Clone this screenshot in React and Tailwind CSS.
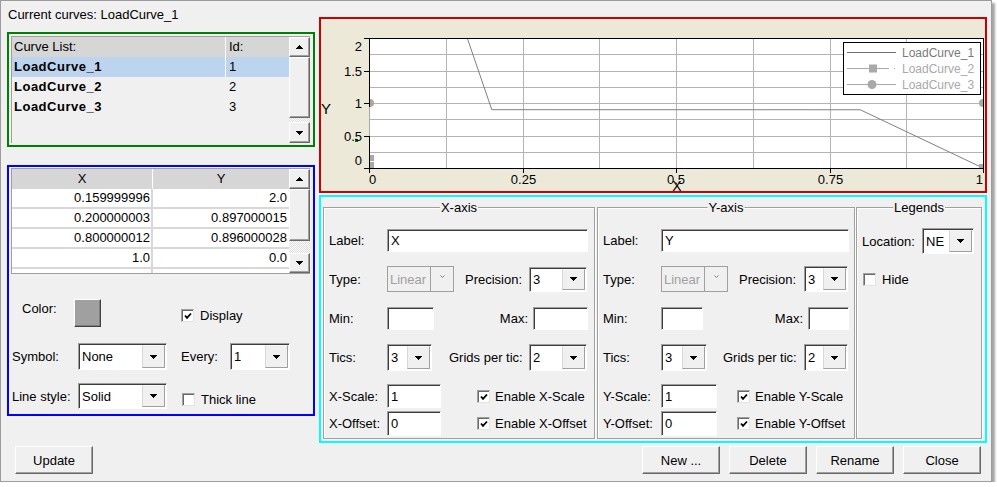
import React from "react";

const raised =
  "border border-t-white border-l-white border-r-[#696969] border-b-[#696969] bg-[#f0f0f0] shadow-[inset_-1px_-1px_0_#a0a0a0]";
const sunken =
  "border border-t-[#a0a0a0] border-l-[#a0a0a0] border-r-white border-b-white bg-white shadow-[inset_1px_1px_0_#3c3c3c]";

const curves = [
  { name: "LoadCurve_1", id: 1, selected: true },
  { name: "LoadCurve_2", id: 2 },
  { name: "LoadCurve_3", id: 3 },
];

const points = [
  ["0.159999996", "2.0"],
  ["0.200000003", "0.897000015"],
  ["0.800000012", "0.896000028"],
  ["1.0", "0.0"],
];

const xAxis = {
  axis: "X",
  label: "w-[201px]",
  precisionText: "w-[64px]",
  precision: "w-[58px] h-[25px]",
  min: "w-[47px]",
  maxText: "w-[99px]",
  max: "w-[55px]",
  tics: "w-[45px] h-[27px]",
  gridsText: "ml-[17px] w-[80px]",
  grids: "w-[58px] h-[27px]",
  scale: "w-[54px]",
  check: "ml-[36px]",
};

const yAxis = {
  axis: "Y",
  label: "w-[188px]",
  precisionText: "w-[65px]",
  precision: "w-[44px] h-[26px]",
  min: "w-[42px]",
  maxText: "w-[105px]",
  max: "w-[41px]",
  tics: "w-[46px] h-[27px]",
  gridsText: "ml-[16px] w-[81px]",
  grids: "w-[44px] h-[27px]",
  scale: "w-[56px]",
  check: "ml-[20px]",
};

function Triangle({ up = false }) {
  return (
    <svg width="7" height="4" viewBox="0 0 7 4" shapeRendering="crispEdges">
      <path
        d={up ? "M3 0h1v1h1v1h1v1h1v1h-7v-1h1v-1h1v-1h1z" : "M0 0h7v1h-1v1h-1v1h-1v1h-1v-1h-1v-1h-1v-1h-1z"}
        fill="#000"
      />
    </svg>
  );
}

function ScrollBar({ thumb, track }) {
  return (
    <div className="flex w-[21px] flex-col">
      <div className={`flex h-[20px] items-center justify-center ${raised}`}>
        <Triangle up />
      </div>
      <div className={`${thumb} ${raised}`} />
      <div className={`${track} bg-[repeating-conic-gradient(#ffffff_0%_25%,#dcdcdc_0%_50%)] bg-[length:2px_2px]`} />
      <div className={`flex flex-1 items-center justify-center ${raised}`}>
        <Triangle />
      </div>
    </div>
  );
}

function Combo({ value, className }) {
  return (
    <div className={`flex ${sunken} ${className}`}>
      <span className="flex flex-1 items-center overflow-hidden pl-[3px]">{value}</span>
      <span className="my-[1px] mr-[1px] flex w-[23px] items-center justify-center border border-t-[#f8f8f8] border-l-[#d8d8d8] border-r-[#a0a0a0] border-b-[#a0a0a0] bg-[#f0f0f0]">
        <Triangle />
      </span>
    </div>
  );
}

function DisabledCombo({ value }) {
  return (
    <div className="flex h-[26px] w-[67px] border border-[#a0a0a0] bg-[#f0f0f0]">
      <span className="flex flex-1 items-center pl-[2px] text-[#a0a0a0]">{value}</span>
      <span className="flex w-[23px] justify-center border-l border-[#a0a0a0] pt-[8px]">
        <svg width="5" height="3" viewBox="0 0 5 3">
          <path d="M0.5 0.5 L2.5 2.5 L4.5 0.5" stroke="#808080" fill="none" />
        </svg>
      </span>
    </div>
  );
}

function Field({ value, className }) {
  return <div className={`flex items-center pl-[3px] ${sunken} ${className}`}>{value}</div>;
}

function Check({ checked, className = "" }) {
  return (
    <span
      className={`flex h-[13px] w-[13px] shrink-0 items-center justify-center border border-t-[#a0a0a0] border-l-[#a0a0a0] border-r-[#e3e3e3] border-b-[#e3e3e3] bg-white shadow-[inset_1px_1px_0_#696969] ${className}`}
    >
      {checked && (
        <svg width="8" height="8" viewBox="0 0 8 8" className="ml-[1px] mt-[1px]">
          <path d="M1 3.5 L3 5.8 L7 1.5" stroke="#000" strokeWidth="1.8" fill="none" />
        </svg>
      )}
    </span>
  );
}

function Button({ children }) {
  return (
    <button type="button" className={`flex h-[28px] w-[78px] items-center justify-center ${raised}`}>
      {children}
    </button>
  );
}

function Group({ title, className, children }) {
  return (
    <div
      className={`relative h-[232px] border border-[#a0a0a0] shadow-[inset_1px_1px_0_#ffffff,1px_1px_0_#ffffff] ${className}`}
    >
      <span className="absolute left-1/2 top-[-8px] -translate-x-1/2 bg-[#f0f0f0] px-[1px] leading-[15px]">
        {title}
      </span>
      <div className="pl-[5px]">{children}</div>
    </div>
  );
}

function CurveList() {
  return (
    <section className="h-[115px] border-2 border-[#008000] py-[2px] pl-[2px] pr-[3px]">
      <div className="flex h-full border-l border-t border-[#a0a0a0]">
        <div className="flex-1">
          <div className="flex h-[20px] bg-[#d6d6d6] leading-[20px]">
            <div className="w-[214px] border-r border-white pl-[2px]">Curve List:</div>
            <div className="flex-1 pl-[3px]">Id:</div>
          </div>
          {curves.map((curve) => (
            <div
              key={curve.id}
              className={`flex h-[20px] leading-[20px] ${curve.selected ? "bg-[#bcd4ee]" : ""}`}
            >
              <div
                className={`w-[214px] pl-[2px] font-bold tracking-[0.5px] ${curve.selected ? "border-r border-white" : ""}`}
              >
                {curve.name}
              </div>
              <div className="flex-1 pl-[3px]">{curve.id}</div>
            </div>
          ))}
        </div>
        <ScrollBar thumb="h-[61px]" track="h-[4px]" />
      </div>
    </section>
  );
}

function PointsPanel() {
  return (
    <section className="h-[251px] border-2 border-[#0000ff] pl-[2px] pr-[3px] pt-[1px]">
      <div className="flex h-[106px] border border-r-0 border-[#a0a0a0]">
        <div className="flex flex-1 flex-col">
          <div className="flex h-[20px] bg-[#d6d6d6] leading-[20px]">
            <div className="w-[141px] border-r border-white text-center">X</div>
            <div className="flex-1 text-center">Y</div>
          </div>
          {points.map(([x, y]) => (
            <div key={x} className="flex h-[20px] border-b-2 border-[#d8d8d8] bg-white leading-[18px]">
              <div className="w-[141px] border-r-2 border-[#d8d8d8] pr-[1px] text-right">{x}</div>
              <div className="flex-1 pr-[2px] text-right">{y}</div>
            </div>
          ))}
          <div className="flex flex-1 bg-white">
            <div className="w-[141px] border-r-2 border-[#d8d8d8]" />
          </div>
        </div>
        <ScrollBar thumb="h-[52px]" track="h-[12px]" />
      </div>

      <div className="mt-[25px] flex h-[28px]">
        <div className="flex w-[170px] pl-[11px]">
          <span className="mt-[2px] w-[52px]">Color:</span>
          <div className="h-[28px] w-[27px] border border-t-white border-l-white border-r-[#404040] border-b-[#404040] bg-[#a0a0a0] shadow-[inset_-1px_-1px_0_#808080]" />
        </div>
        <div className="mt-[10px] flex h-[13px] items-center">
          <Check checked />
          <span className="ml-[6px]">Display</span>
        </div>
      </div>

      <div className="mt-[16px] flex h-[27px] items-center">
        <div className="flex w-[170px] items-center pl-[1px]">
          <span className="w-[66px]">Symbol:</span>
          <Combo value="None" className="h-[27px] w-[89px]" />
        </div>
        <span className="w-[49px]">Every:</span>
        <Combo value="1" className="h-[27px] w-[60px]" />
      </div>

      <div className="mt-[13px] flex h-[26px]">
        <div className="flex w-[170px] items-center pl-[1px]">
          <span className="w-[66px]">Line style:</span>
          <Combo value="Solid" className="h-[26px] w-[89px]" />
        </div>
        <div className="mt-[10px] flex h-[13px] items-center">
          <Check className="ml-[1px]" />
          <span className="ml-[6px]">Thick line</span>
        </div>
      </div>
    </section>
  );
}

function Chart() {
  const left = 369;
  const right = 983;
  const top = 38;
  const bottom = 168;
  const xAt = (v) => left + v * (right - left);
  const yAt = (v) => bottom - (v / 2) * (bottom - top);
  const crisp = (v) => Math.round(v) + 0.5;
  const steps = [1, 2, 3, 4, 5, 6, 7].map((i) => i / 8);
  const curve = [
    [0.16, 2],
    [0.2, 0.897],
    [0.8, 0.896],
    [1, 0],
  ]
    .map(([x, y]) => `${xAt(x)},${yAt(y)}`)
    .join(" ");

  return (
    <section className="h-[176px] border-2 border-[#cc0000] bg-[#ece9d8]">
      <svg
        width="664"
        height="172"
        viewBox="321 19 664 172"
        className="block"
        fontFamily="'Liberation Sans', Arial, sans-serif"
      >
        <defs>
          <clipPath id="plot">
            <rect x={left} y={top} width={right - left} height={bottom - top} />
          </clipPath>
        </defs>
        <rect x={left} y={top} width={right - left} height={bottom - top} fill="#fff" />
        {steps.map((s) => (
          <line key={`v${s}`} x1={crisp(xAt(s))} x2={crisp(xAt(s))} y1={top} y2={bottom} stroke="#b4b4b4" />
        ))}
        {steps.map((s) => (
          <line key={`h${s}`} x1={left} x2={right} y1={crisp(yAt(s * 2))} y2={crisp(yAt(s * 2))} stroke="#b4b4b4" />
        ))}
        <polyline points={curve} fill="none" stroke="#808080" />

        <g clipPath="url(#plot)" fill="#a8a8a8">
          <circle cx={370} cy={103} r={4} />
          <rect x={369} y={155} width={5} height={6} />
          <rect x={369} y={162} width={5} height={6} />
          <circle cx={983} cy={103} r={4} />
          <rect x={979} y={164} width={5} height={5} />
        </g>

        <rect x={left + 0.5} y={top + 0.5} width={right - left} height={bottom - top} fill="none" stroke="#000" />
        <line x1={369.5} x2={369.5} y1={107} y2={136} stroke="#a8a8a8" />
        <rect x={355} y={139} width={3} height={3} fill="#008000" />

        {[0, 0.5, 1, 1.5, 2].map((v) => (
          <line key={`ty${v}`} x1={364} x2={369} y1={crisp(yAt(v))} y2={crisp(yAt(v))} stroke="#000" />
        ))}
        {[0, 0.25, 0.5, 0.75, 1].map((v) => (
          <line key={`tx${v}`} x1={crisp(xAt(v))} x2={crisp(xAt(v))} y1={168} y2={173} stroke="#000" />
        ))}

        <g fontSize="13" fill="#000">
          <text x={362} y={50.5} textAnchor="end">2</text>
          <text x={362} y={75.5} textAnchor="end">1.5</text>
          <text x={362} y={107.5} textAnchor="end">1</text>
          <text x={362} y={140.5} textAnchor="end">0.5</text>
          <text x={362} y={165} textAnchor="end">0</text>
          <text x={369} y={184}>0</text>
          <text x={523.5} y={184} textAnchor="middle">0.25</text>
          <text x={676} y={184} textAnchor="middle">0.5</text>
          <text x={830.5} y={184} textAnchor="middle">0.75</text>
          <text x={983} y={184} textAnchor="end">1</text>
        </g>
        <text x={321} y={114} fontSize="15">Y</text>
        <text x={677} y={191} fontSize="14" textAnchor="middle">X</text>

        <rect x={843.5} y={42.5} width={137} height={52} fill="#fff" stroke="#000" />
        <line x1={847} x2={896} y1={52.5} y2={52.5} stroke="#6e6e6e" />
        <text x={902} y={57} fontSize="12" fill="#7a7a7a">LoadCurve_1</text>
        <line x1={847} x2={889} y1={68.5} y2={68.5} stroke="#a9a9a9" />
        <rect x={869} y={64.5} width={8} height={8} fill="#a9a9a9" />
        <rect x={894} y={68} width={1} height={1} fill="#a9a9a9" />
        <text x={902} y={73} fontSize="12" fill="#a9a9a9">LoadCurve_2</text>
        <line x1={847} x2={896} y1={84.5} y2={84.5} stroke="#a9a9a9" />
        <circle cx={872} cy={84.5} r={4.5} fill="#a9a9a9" />
        <text x={902} y={89} fontSize="12" fill="#a9a9a9">LoadCurve_3</text>
      </svg>
    </section>
  );
}

function AxisGroup({ c, className }) {
  return (
    <Group title={`${c.axis}-axis`} className={className}>
      <div className="mt-[21px] flex h-[23px] items-center">
        <span className="w-[58px]">Label:</span>
        <Field value={c.axis} className={`h-[23px] ${c.label}`} />
      </div>
      <div className="mt-[14px] flex h-[26px] items-center">
        <span className="w-[58px]">Type:</span>
        <DisabledCombo value="Linear" />
        <span className={`ml-[11px] ${c.precisionText}`}>Precision:</span>
        <Combo value="3" className={c.precision} />
      </div>
      <div className="mt-[15px] flex h-[23px] items-center">
        <span className="w-[58px]">Min:</span>
        <Field value="" className={`h-[23px] ${c.min}`} />
        <span className={`pr-[5px] text-right ${c.maxText}`}>Max:</span>
        <Field value="" className={`h-[23px] ${c.max}`} />
      </div>
      <div className="mt-[14px] flex h-[27px] items-center">
        <span className="w-[58px]">Tics:</span>
        <Combo value="3" className={c.tics} />
        <span className={c.gridsText}>Grids per tic:</span>
        <Combo value="2" className={c.grids} />
      </div>
      <div className="mt-[13px] flex h-[24px] items-center">
        <span className="w-[58px]">{c.axis}-Scale:</span>
        <Field value="1" className={`h-[24px] ${c.scale}`} />
        <Check checked className={c.check} />
        <span className="ml-[5px]">Enable {c.axis}-Scale</span>
      </div>
      <div className="mt-[3px] flex h-[25px] items-center">
        <span className="w-[58px]">{c.axis}-Offset:</span>
        <Field value="0" className={`h-[25px] ${c.scale}`} />
        <Check checked className={c.check} />
        <span className="ml-[5px]">Enable {c.axis}-Offset</span>
      </div>
    </Group>
  );
}

function App() {
  return (
    <div className="h-[482px] w-[992px] border border-[#9c9c9c] bg-[#f0f0f0] font-['Liberation_Sans',Arial,sans-serif] text-[13px] leading-[15px] text-black shadow-[3px_3px_2px_rgba(0,0,0,0.35)]">
      <div className="flex h-[442px] pl-[6px]">
        <div className="flex w-[308px] flex-col">
          <div className="h-[31px] pl-[1px] pt-[6px]">Current curves: LoadCurve_1</div>
          <CurveList />
          <div className="mt-[18px]">
            <PointsPanel />
          </div>
        </div>

        <div className="ml-[4px] w-[668px] pt-[16px]">
          <Chart />
          <section className="mt-[2px] flex h-[248px] border-2 border-[#00ffff] pl-[2px] pt-[10px]">
            <AxisGroup c={xAxis} className="w-[272px]" />
            <AxisGroup c={yAxis} className="ml-[2px] w-[258px]" />
            <Group title="Legends" className="ml-[1px] w-[126px]">
              <div className="mt-[20px] flex h-[26px] items-center">
                <span className="w-[60px]">Location:</span>
                <Combo value="NE" className="h-[26px] w-[52px]" />
              </div>
              <div className="mt-[19px] flex h-[13px] items-center">
                <Check className="ml-[1px]" />
                <span className="ml-[6px]">Hide</span>
              </div>
            </Group>
          </section>
        </div>
      </div>

      <div className="flex pl-[14px] pr-[10px] pt-[3px]">
        <Button>Update</Button>
        <div className="ml-auto flex gap-[9px]">
          <Button>New ...</Button>
          <Button>Delete</Button>
          <Button>Rename</Button>
          <Button>Close</Button>
        </div>
      </div>
    </div>
  );
}

export default App;
